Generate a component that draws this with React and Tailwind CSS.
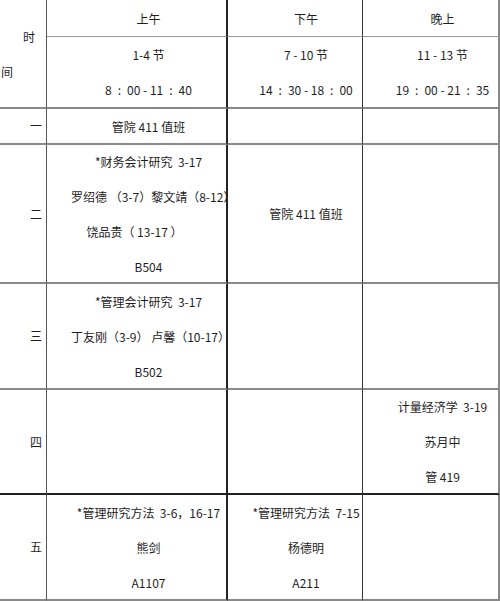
import React from 'react'

// column borders (right edge of each column)
const colBorder = [
  'border-r border-r-[#555]',
  'border-r-2 border-r-[#222]',
  'border-r border-r-[#333]',
  'border-r-2 border-r-[#888]',
]

// horizontal line under each row
const rowBorder = [
  'border-b border-b-[#999]',
  'border-b-2 border-b-[#888]',
  'border-b-2 border-b-[#8a8a8a]',
  'border-b-2 border-b-[#888]',
  'border-b-2 border-b-[#888]',
  'border-b-2 border-b-[#222]',
  'border-b-2 border-b-[#888]',
]

const padCol = ['', 'pl-6', 'pl-[22px]', 'pl-6']

const Cell = ({ row, col, lines = [], className = '' }) => (
  <div
    className={`flex flex-col justify-center overflow-hidden whitespace-pre leading-[35px] ${colBorder[col]} ${rowBorder[row]} ${padCol[col]} ${className}`}
  >
    {lines.map((l, i) =>
      typeof l === 'string' ? (
        <div key={i} className="text-center">{l}</div>
      ) : (
        <div key={i} className={`text-center ${l.cls}`}>{l.t}</div>
      )
    )}
  </div>
)

const Label = ({ row, text }) => (
  <div className={`flex items-center justify-end pr-[4px] ${colBorder[0]} ${rowBorder[row]}`}>
    {text}
  </div>
)

export default function App() {
  return (
    <div className="w-[500px] h-[601px] bg-white text-[12px] text-[#1e1e1e] font-['Noto_Sans_CJK_SC','Liberation_Sans',sans-serif] overflow-hidden">
      <div className="grid grid-cols-[47px_181px_135px_137px] grid-rows-[37px_72px_36px_139px_106px_105px_106px]">
        {/* corner header: 时间 */}
        <div className={`row-span-2 flex flex-col justify-center leading-[35px] ${colBorder[0]} ${rowBorder[1]}`}>
          <div className="text-right pr-[11px]">时</div>
          <div className="text-left pl-[1px]">间</div>
        </div>
        <Cell row={0} col={1} lines={['上午']} />
        <Cell row={0} col={2} lines={['下午']} />
        <Cell row={0} col={3} lines={['晚上']} />

        <Cell row={1} col={1} lines={['1-4 节', '8\u2002:\u200200 - 11\u2002:\u200240']} />
        <Cell row={1} col={2} lines={['7 - 10 节', '14\u2002:\u200230 - 18\u2002:\u200200']} />
        <Cell row={1} col={3} lines={['11 - 13 节', '19\u2002:\u200200 - 21\u2002:\u200235']} />

        {/* 一 */}
        <Label row={2} text="一" />
        <Cell row={2} col={1} lines={['管院 411 值班']} />
        <Cell row={2} col={2} />
        <Cell row={2} col={3} />

        {/* 二 */}
        <Label row={3} text="二" />
        <Cell
          row={3}
          col={1}
          lines={[
            '*财务会计研究  3-17',
            '罗绍德 （3-7）黎文靖（8-12）',
            { t: '饶品贵（ 13-17 ）', cls: 'pr-[28px]' },
            'B504',
          ]}
        />
        <Cell row={3} col={2} lines={['管院 411 值班']} />
        <Cell row={3} col={3} />

        {/* 三 */}
        <Label row={4} text="三" />
        <Cell
          row={4}
          col={1}
          lines={['*管理会计研究  3-17', '丁友刚（3-9） 卢馨（10-17）', 'B502']}
        />
        <Cell row={4} col={2} />
        <Cell row={4} col={3} />

        {/* 四 */}
        <Label row={5} text="四" />
        <Cell row={5} col={1} />
        <Cell row={5} col={2} />
        <Cell row={5} col={3} lines={['计量经济学  3-19', '苏月中', '管 419']} />

        {/* 五 */}
        <Label row={6} text="五" />
        <Cell row={6} col={1} lines={['*管理研究方法  3-6，16-17', '熊剑', 'A1107']} />
        <Cell row={6} col={2} lines={['*管理研究方法  7-15', '杨德明', 'A211']} />
        <Cell row={6} col={3} />
      </div>
    </div>
  )
}
